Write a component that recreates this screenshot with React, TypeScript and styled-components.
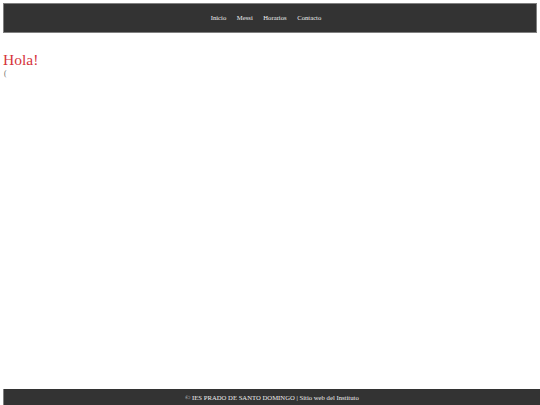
import React from 'react';
import styled, {createGlobalStyle} from "styled-components";

const navData = ['Inicio', 'Messi', 'Horarios', 'Contacto']

const GlobalStyle = createGlobalStyle`
    html, body {
        margin: 0;
        padding: 0;
        background: #ffffff;
    }
    body {
        font-family: 'Liberation Serif', 'Times New Roman', serif;
    }
`

export default function App() {
    return (
        <>
            <GlobalStyle/>
            <Page>
                <Header>
                    <NavList>
                        {navData.map((d, i) => (
                            <NavItem key={i}>
                                <NavLink href="#">{d}</NavLink>
                            </NavItem>
                        ))}
                    </NavList>
                </Header>
                <Main>
                    <Title>Hola!</Title>
                    <Note>(</Note>
                </Main>
            </Page>
            <Footer>© IES PRADO DE SANTO DOMINGO | Sitio web del Instituto</Footer>
        </>
    );
};

const Page = styled.div`
    padding: 3px 3px 0 3px;
`
const Header = styled.header`
    display: flex;
    justify-content: center;
    align-items: center;
    height: 28px;
    background-color: #333333;
    border: 1px solid #808080;
    padding-right: 8px;
`
const NavList = styled.ul`
    display: flex;
    align-items: center;
    gap: 10.5px;
    margin: 0;
    padding: 0;
    list-style: none;
    font-size: 6.7px;
    line-height: 1;
`
const NavItem = styled.li`

`
const NavLink = styled.a`
    color: #eeeeee;
    text-decoration: none;
`
const Main = styled.main`
    padding-top: 18px;
`
const Title = styled.h1`
    margin: 0;
    color: #d6333b;
    font-size: 15.5px;
    font-weight: 400;
`
const Note = styled.p`
    margin: 0 0 0 1px;
    color: #666666;
    font-size: 7.5px;
`
const Footer = styled.footer`
    position: fixed;
    left: 3px;
    right: 0;
    bottom: 0;
    height: 16px;
    display: flex;
    justify-content: center;
    align-items: center;
    background-color: #333333;
    border-left: 1px solid #808080;
    color: #eeeeee;
    font-size: 6.7px;
`
